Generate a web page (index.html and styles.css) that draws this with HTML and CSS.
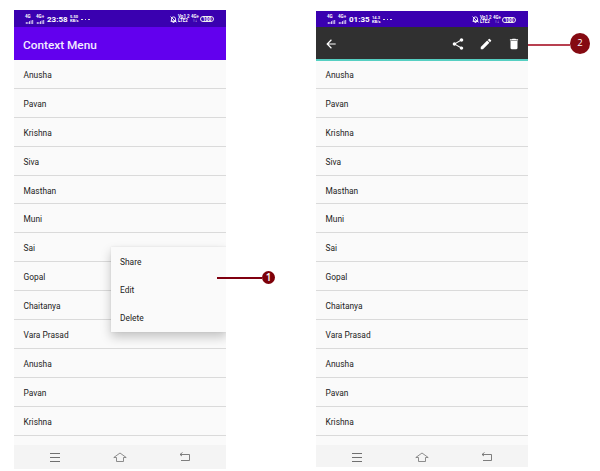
FILE: index.html
```html
<!DOCTYPE html>
<html lang="en">
<head>
<meta charset="utf-8">
<title>Context Menu</title>
<link rel="stylesheet" href="styles.css">
</head>
<body>
<svg class="defs" width="0" height="0">
  <symbol id="bars" viewBox="0 0 9 5"><path d="M.5 2.500V5M2.500 2.500V5M4.500 1.500V5M6.500 .5V5M8.500 0V5" stroke="#fff" stroke-width="1"/></symbol>
  <symbol id="bell" viewBox="0 0 24 24"><path d="M5 18V10a7 7 0 0 1 14 0v8zM2 18h20M9 22h6M2 2l20 20" fill="none" stroke="#fff" stroke-width="3"/></symbol>
  <symbol id="recent" viewBox="0 0 14 12"><path d="M2 2.500h10M2 6.500h10M2 10.500h10" stroke="#707070"/></symbol>
  <symbol id="home" viewBox="0 0 14 12"><path d="M3.500 6.500H.8L7 2l6.200 4.500H10.500M3.500 6.500v4h7v-4" fill="none" stroke="#808080" stroke-width=".9"/></symbol>
  <symbol id="back" viewBox="0 0 14 12"><path d="M4.500 1.500L2 3.500h9.500v6H3M2 3.500l2 1.500" fill="none" stroke="#707070" stroke-width=".9"/></symbol>
</svg>

<div class="phone">
  <div class="status">
    <span class="signal"><small>4G</small><svg><use href="#bars"/></svg></span>
    <span class="signal"><small>4G+</small><svg><use href="#bars"/></svg></span>
    <span class="time">23:58</span>
    <span class="stack speed"><b>5.50</b><b>KB/s</b></span>
    <span class="dots"><i></i><i></i><i></i></span>
    <span class="right">
      <svg class="bell"><use href="#bell"/></svg>
      <span class="stack volte"><b>Vo1 2</b><b>LTE2</b></span>
      <span class="stack net"><b>4G+</b><b>↑↓</b></span>
      <span class="battery">100</span>
    </span>
  </div>
  <div class="appbar">Context Menu</div>
  <div class="content">
    <ul class="names">
      <li>Anusha</li><li>Pavan</li><li>Krishna</li><li>Siva</li><li>Masthan</li><li>Muni</li><li>Sai</li><li>Gopal</li><li>Chaitanya</li><li>Vara Prasad</li><li>Anusha</li><li>Pavan</li><li>Krishna</li>
    </ul>
    <div class="menu"><div>Share</div><div>Edit</div><div>Delete</div></div>
  </div>
  <div class="nav"><svg><use href="#recent"/></svg><svg><use href="#home"/></svg><svg><use href="#back"/></svg></div>
</div>

<div class="phone second">
  <div class="status">
    <span class="signal"><small>4G</small><svg><use href="#bars"/></svg></span>
    <span class="signal"><small>4G+</small><svg><use href="#bars"/></svg></span>
    <span class="time">01:35</span>
    <span class="stack speed"><b>14.3</b><b>KB/s</b></span>
    <span class="dots"><i></i><i></i><i></i></span>
    <span class="right">
      <svg class="bell"><use href="#bell"/></svg>
      <span class="stack volte"><b>Vo1 2</b><b>LTE2</b></span>
      <span class="stack net"><b>4G+</b><b>↑↓</b></span>
      <span class="battery">100</span>
    </span>
  </div>
  <div class="actionbar">
    <svg viewBox="0 0 24 24"><path d="M20 11H7.830l5.590-5.590L12 4l-8 8 8 8 1.410-1.410L7.830 13H20z"/></svg>
    <span class="actions">
      <svg viewBox="0 0 24 24"><path d="M18 16.080c-.76 0-1.440.3-1.960.77L8.910 12.700c.05-.23.09-.46.09-.7s-.04-.47-.09-.7l7.050-4.110c.54.5 1.250.81 2.040.81 1.660 0 3-1.340 3-3s-1.340-3-3-3-3 1.340-3 3c0 .24.04.47.09.7L8.040 9.810C7.500 9.310 6.790 9 6 9c-1.660 0-3 1.340-3 3s1.340 3 3 3c.79 0 1.500-.31 2.040-.81l7.120 4.160c-.05.21-.08.43-.08.65 0 1.610 1.310 2.920 2.920 2.920s2.920-1.310 2.920-2.920-1.310-2.920-2.920-2.920z"/></svg>
      <svg viewBox="0 0 24 24"><path d="M3 17.250V21h3.750L17.810 9.940l-3.750-3.750zM20.710 7.040a1 1 0 0 0 0-1.410l-2.340-2.340a1 1 0 0 0-1.410 0l-1.830 1.830 3.750 3.750z"/></svg>
      <svg viewBox="0 0 24 24"><path d="M6 19c0 1.100.9 2 2 2h8c1.100 0 2-.9 2-2V7H6zM19 4h-3.500l-1-1h-5l-1 1H5v2h14z"/></svg>
    </span>
  </div>
  <div class="content">
    <ul class="names">
      <li>Anusha</li><li>Pavan</li><li>Krishna</li><li>Siva</li><li>Masthan</li><li>Muni</li><li>Sai</li><li>Gopal</li><li>Chaitanya</li><li>Vara Prasad</li><li>Anusha</li><li>Pavan</li><li>Krishna</li>
    </ul>
  </div>
  <div class="nav"><svg><use href="#recent"/></svg><svg><use href="#home"/></svg><svg><use href="#back"/></svg></div>
</div>

<div class="callout one"><span>1</span></div>
<div class="callout two"><span>2</span></div>
</body>
</html>
```
FILE: styles.css
```css
* { box-sizing: border-box; }
body {
  margin: 0;
  width: 600px;
  height: 471px;
  padding: 10px 0 0 14px;
  display: flex;
  align-items: flex-start;
  gap: 90px;
  position: relative;
  overflow: hidden;
  background: #fff;
  font-family: Roboto, "Liberation Sans", sans-serif;
  color: #1c1c1c;
}
.defs { position: absolute; }
.phone { width: 212px; height: 459px; flex: none; display: flex; flex-direction: column; }
.second { height: 456px; margin-top: 1px; }

.status {
  height: 17px;
  padding: 1px 12px 0 11px;
  display: flex;
  align-items: center;
  background: #3a00b0;
  color: #fff;
}
.second .status { height: 16px; }
.signal { width: 9px; height: 9px; margin-right: 2px; display: flex; flex-direction: column; justify-content: space-between; }
.signal small { font-size: 4.500px; line-height: 4px; font-weight: 700; }
.signal svg { width: 9px; height: 4px; }
.time { width: 21px; font-size: 8px; line-height: 9px; font-weight: 700; white-space: nowrap; }
.stack { display: flex; flex-direction: column; font-size: 4.500px; line-height: 4px; white-space: nowrap; }
.stack b { font-weight: 700; }
.speed { width: 9px; margin-left: 2px; font-size: 4px; }
.dots { display: flex; gap: 2px; margin-left: 2px; }
.dots i { width: 1.500px; height: 1px; background: #ddd; }
.right { margin-left: auto; display: flex; align-items: center; }
.bell { width: 7px; height: 7px; margin-right: 1px; }
.volte { width: 12px; }
.net { width: 8px; margin-left: 1px; align-items: center; }
.battery {
  width: 14px;
  height: 6px;
  margin-left: 1px;
  border: 1px solid #eee;
  border-radius: 3px;
  font-size: 5px;
  line-height: 4px;
  font-weight: 700;
  text-align: center;
}

.appbar {
  height: 33px;
  padding: 2px 9px 0;
  display: flex;
  align-items: center;
  background: #6200ee;
  color: #f3ebff;
  font-size: 11.800px;
  font-weight: 500;
}
.actionbar {
  height: 34px;
  padding: 2px 7px 0 8px;
  display: flex;
  align-items: center;
  justify-content: space-between;
  background: #303030;
  border-bottom: 2px solid #55cfc2;
}
.actionbar svg { width: 14px; height: 14px; fill: #fff; }
.actions { display: flex; gap: 14px; }

.content { flex: 1; min-height: 0; position: relative; overflow: hidden; background: #fafafa; }
.names { margin: 0; padding: 0; list-style: none; }
.names li {
  height: 28.900px;
  padding: 2px 9.500px 0;
  display: flex;
  align-items: center;
  border-bottom: 1px solid #dadada;
  font-size: 8.400px;
}
.second .names li:first-child { height: 27.900px; }
.menu {
  position: absolute;
  left: 97px;
  top: 187px;
  width: 116px;
  height: 85px;
  padding: 1px 9px 0;
  background: #fafafa;
  box-shadow: 0 5px 10px rgba(0,0,0,.22), 0 0 2px rgba(0,0,0,.08);
  font-size: 8.400px;
}
.menu div { height: 28.200px; display: flex; align-items: center; }
.nav {
  height: 24px;
  padding: 0 34px 0 34px;
  display: flex;
  align-items: center;
  justify-content: space-between;
  background: #f4f4f4;
}
.second .nav { height: 22px; align-items: flex-end; padding-bottom: 4px; }
.nav svg { width: 14px; height: 12px; }

.callout { position: absolute; display: flex; align-items: center; justify-content: flex-end; }
.callout::before { content: ""; flex: 1; }
.callout span { color: #fff; border-radius: 50%; text-align: center; font-family: "Open Sans", sans-serif; }
.one { left: 217px; top: 271px; width: 58px; height: 13px; }
.one::before { height: 2px; background: #800010; }
.one span { width: 13px; height: 13px; background: #7d0009; font-size: 10px; line-height: 13px; font-weight: 600; }
.two { left: 528px; top: 33px; width: 62px; height: 21px; }
.two::before { height: 2px; background: #b84050; margin-top: 2px; }
.two span { width: 20px; height: 21px; background: #850a12; font-size: 9.500px; line-height: 20px; }
```
